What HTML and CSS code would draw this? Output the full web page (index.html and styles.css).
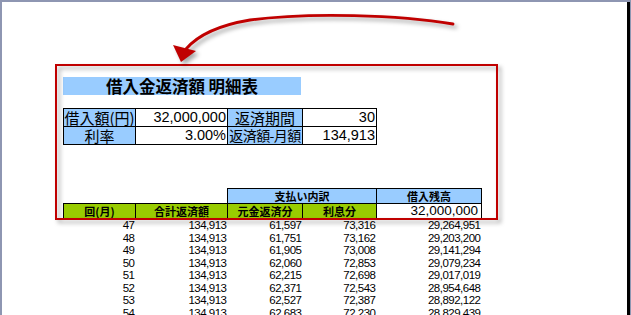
FILE: index.html
```html
<!DOCTYPE html>
<html lang="ja">
<head>
<meta charset="utf-8">
<link rel="stylesheet" href="styles.css">
</head>
<body>
<div class="page">
  <div class="sheet">
    <div class="title">借入金返済額 明細表</div>
    <table class="summary">
      <colgroup><col class="c1"><col class="c2"><col class="c3"><col class="c4"></colgroup>
      <tr>
        <td class="lbl">借入額(円)</td><td class="num">32,000,000</td>
        <td class="lbl">返済期間</td><td class="num">30</td>
      </tr>
      <tr>
        <td class="lbl">利率</td><td class="num">3.00%</td>
        <td class="lbl tight">返済額-月額</td><td class="num">134,913</td>
      </tr>
    </table>
    <table class="detail">
      <colgroup><col class="d1"><col class="d2"><col class="d3"><col class="d4"><col class="d5"></colgroup>
      <tr class="h1">
        <td class="blank"></td><td class="blank"></td>
        <td class="hb" colspan="2">支払い内訳</td><td class="hb">借入残高</td>
      </tr>
      <tr class="h2">
        <td class="hg">回(月)</td><td class="hg">合計返済額</td><td class="hg">元金返済分</td><td class="hg">利息分</td><td class="hw">32,000,000</td>
      </tr>
      <tr class="row"><td>47</td><td>134,913</td><td>61,597</td><td>73,316</td><td>29,264,951</td></tr>
      <tr class="row"><td>48</td><td>134,913</td><td>61,751</td><td>73,162</td><td>29,203,200</td></tr>
      <tr class="row"><td>49</td><td>134,913</td><td>61,905</td><td>73,008</td><td>29,141,294</td></tr>
      <tr class="row"><td>50</td><td>134,913</td><td>62,060</td><td>72,853</td><td>29,079,234</td></tr>
      <tr class="row"><td>51</td><td>134,913</td><td>62,215</td><td>72,698</td><td>29,017,019</td></tr>
      <tr class="row"><td>52</td><td>134,913</td><td>62,371</td><td>72,543</td><td>28,954,648</td></tr>
      <tr class="row"><td>53</td><td>134,913</td><td>62,527</td><td>72,387</td><td>28,892,122</td></tr>
      <tr class="row"><td>54</td><td>134,913</td><td>62,683</td><td>72,230</td><td>28,829,439</td></tr>
    </table>
  </div>
  <div class="highlight"></div>
  <svg class="arrow" width="631" height="100" viewBox="0 0 631 100">
    <path d="M453,24 C400,15 310,12 250,20 C220,25 198,35 186,49" fill="none" stroke="#c00000" stroke-width="2.8" stroke-linecap="round"/>
    <polygon points="173,45 196,51 181,62" fill="#c00000"/>
  </svg>
</div>
</body>
</html>
```
FILE: styles.css
```css
html, body {
  margin: 0;
  padding: 0;
}
body {
  background: #8e96b2;
  height: 315px;
  overflow: hidden;
}
.page {
  position: relative;
  margin: 2px 1px 0 2px;
  background: #fff;
  border-right: 3px solid #000;
  height: 400px;
}
.sheet {
  padding: 75px 0 0 61px;
  font-family: "Noto Sans CJK JP", "Liberation Sans", sans-serif;
  color: #000;
}
.title {
  width: 238px;
  height: 18px;
  line-height: 18px;
  background: #99ccff;
  text-align: center;
  font-weight: bold;
  font-size: 16.5px;
}
table {
  border-collapse: collapse;
  table-layout: fixed;
}
td {
  padding: 0;
  white-space: nowrap;
  overflow: hidden;
}
.summary {
  margin-top: 12.5px;
  width: 313px;
}
.summary .c1 { width: 72px; }
.summary .c2 { width: 92px; }
.summary .c3 { width: 75px; }
.summary .c4 { width: 74px; }
.summary td {
  border: 1px solid #000;
  height: 17.4px;
  line-height: 17px;
  font-size: 15px;
}
.summary .lbl {
  background: #99ccff;
  text-align: center;
}
.summary .tight {
  font-size: 14px;
  letter-spacing: -0.6px;
}
.summary .num {
  text-align: right;
  font-family: "Liberation Sans", sans-serif;
  font-size: 14.5px;
  padding-right: 1px;
}
.detail {
  margin-top: 42.5px;
  width: 418px;
}
.detail .d1 { width: 72px; }
.detail .d2 { width: 92px; }
.detail .d3 { width: 75px; }
.detail .d4 { width: 74px; }
.detail .d5 { width: 105px; }
.detail .h1 td, .detail .h2 td {
  height: 14px;
  line-height: 14px;
  font-size: 11px;
  font-weight: bold;
  text-align: center;
}
.detail .blank {
  border: none;
}
.detail .hb {
  background: #99ccff;
  border: 1px solid #000;
}
.detail .hg {
  background: #99cc00;
  border: 1px solid #000;
}
.detail .h2 .hw {
  background: #fff;
  border: 1px solid #000;
  text-align: right;
  font-family: "Liberation Sans", sans-serif;
  font-weight: normal;
  font-size: 13.5px;
  padding-right: 3px;
}
.detail .row td {
  height: 12.57px;
  line-height: 12px;
  font-family: "Liberation Sans", sans-serif;
  font-size: 11.5px;
  letter-spacing: -0.5px;
  text-align: right;
  padding-right: 1px;
}
.highlight {
  position: absolute;
  left: 53px;
  top: 62px;
  width: 443px;
  height: 156px;
  box-sizing: border-box;
  border: 2px solid #c00000;
  filter: drop-shadow(3px 3px 2px rgba(0, 0, 0, 0.35));
}
.arrow {
  position: absolute;
  left: -2px;
  top: -2px;
  filter: drop-shadow(3px 3px 2px rgba(0, 0, 0, 0.35));
}
```
